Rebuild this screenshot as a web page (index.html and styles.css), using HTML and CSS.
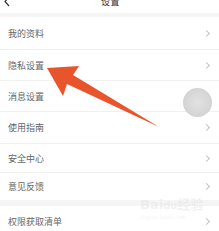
FILE: index.html
```html
<!DOCTYPE html>
<html lang="zh">
<head>
<meta charset="utf-8">
<link rel="stylesheet" href="styles.css">
</head>
<body>
<div class="page">
  <header class="topbar">
    <svg class="back" width="8" height="10" viewBox="0 0 8 10"><polyline points="6,-3 2,1.5 6,6" fill="none" stroke="#333" stroke-width="1.2"/></svg>
    <span class="title">设置</span>
  </header>
  <div class="gap g1"></div>
  <div class="row h32"><span>我的资料</span><i class="chev"></i></div>
  <div class="sep"></div>
  <div class="row h30"><span>隐私设置</span><i class="chev"></i></div>
  <div class="sep"></div>
  <div class="row h30"><span>消息设置</span><i class="chev"></i></div>
  <div class="sep"></div>
  <div class="row h31"><span>使用指南</span><i class="chev"></i></div>
  <div class="sep"></div>
  <div class="row h28"><span>安全中心</span><i class="chev"></i></div>
  <div class="sep"></div>
  <div class="row h27"><span>意见反馈</span><i class="chev"></i></div>
  <div class="gap g2"></div>
  <div class="row h30"><span>权限获取清单</span><i class="chev"></i></div>

  <div class="float-ball"></div>
  <div class="watermark">Bai<span class="paw">du</span>经验<small>jingyan.baidu.com</small></div>
  <svg class="arrow" width="219" height="231" viewBox="0 0 219 231">
    <polygon points="47,68 79,66 73,75 159,127 67,84 63,96" fill="#e8542b"/>
  </svg>
</div>
</body>
</html>
```
FILE: styles.css
```css
html, body {
  margin: 0;
  padding: 0;
  background: #ffffff;
}
.page {
  position: relative;
  width: 219px;
  height: 231px;
  overflow: hidden;
  font-family: "Noto Sans CJK SC", "Noto Sans", sans-serif;
  background: #ffffff;
}
.topbar {
  height: 13px;
  display: flex;
  justify-content: center;
  align-items: flex-start;
  position: relative;
  background: #fff;
}
.back {
  position: absolute;
  left: 3px;
  top: 0;
}
.title {
  font-size: 9px;
  line-height: 4px;
  color: #333;
  letter-spacing: 0.5px;
  margin-left: 2px;
}
.gap {
  background: #f5f5f5;
}
.g1 { height: 4px; }
.g2 { height: 6px; }
.sep {
  height: 1px;
  background: #f0f0f0;
}
.row {
  display: flex;
  align-items: center;
  justify-content: space-between;
  padding: 0 8px 0 8px;
  font-size: 9px;
  color: #666;
  letter-spacing: 0px;
  background: #fff;
}
.h27 { height: 27px; }
.h28 { height: 28px; }
.h30 { height: 30px; }
.h31 { height: 31px; }
.h32 { height: 32px; }
.chev {
  width: 4px;
  height: 4px;
  border-right: 1px solid #c4c4c4;
  border-top: 1px solid #c4c4c4;
  transform: rotate(45deg);
  margin-right: 2px;
}
.float-ball {
  position: absolute;
  left: 183px;
  top: 88px;
  width: 29px;
  height: 29px;
  border-radius: 50%;
  background: radial-gradient(circle at 50% 50%, #e2e2e2 0%, #d6d6d6 60%, #c8c8c8 100%);
}
.watermark {
  position: absolute;
  left: 140px;
  top: 197px;
  font-family: "DejaVu Sans", "Noto Sans CJK SC", sans-serif;
  font-size: 13px;
  font-weight: bold;
  color: rgba(225, 225, 225, 0.45);
  line-height: 16px;
  white-space: nowrap;
}
.watermark .paw {
  font-size: 10px;
}
.watermark small {
  display: block;
  font-size: 5px;
  line-height: 6px;
  font-weight: normal;
}
.arrow {
  position: absolute;
  left: 0;
  top: 0;
}
```
